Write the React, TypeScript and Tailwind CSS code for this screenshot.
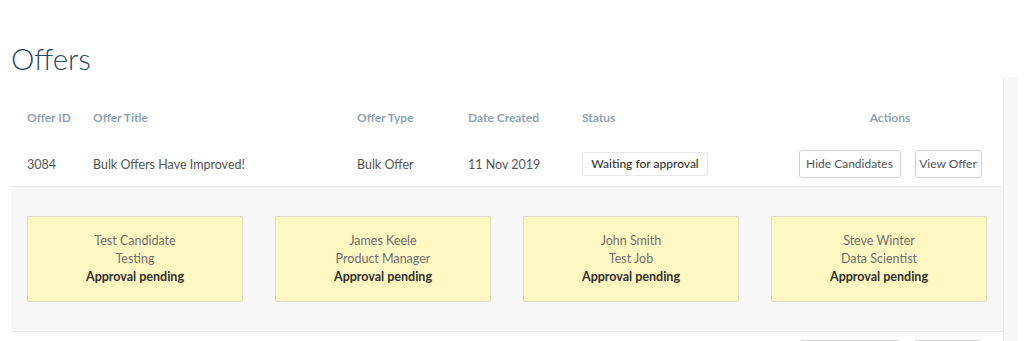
import React from "react";

const font = { fontFamily: "Lato, 'Noto Sans', sans-serif" };

const candidates = [
  { name: "Test Candidate", role: "Testing" },
  { name: "James Keele", role: "Product Manager" },
  { name: "John Smith", role: "Test Job" },
  { name: "Steve Winter", role: "Data Scientist" },
];

const cols = "grid grid-cols-[66px_264px_111px_114px_195px_1fr] pl-[16px]";

function Btn({ children, w }: { children?: React.ReactNode; w: string }) {
  return (
    <button
      className={`${w} h-[28px] border border-[#cfcfcf] rounded-[3px] bg-white text-[12px] text-[#555] leading-none text-center`}
    >
      {children}
    </button>
  );
}

export default function App() {
  return (
    <div className="w-[1024px] h-[341px] overflow-hidden bg-white flex" style={font}>
      <div className="w-[1003px] shrink-0 pl-[11px]">
        <h1 className="pt-[42px] text-[29.5px] leading-[34px] font-light text-[#1f4b62]">Offers</h1>
        <div className="mt-[23px]">
          <div className={`${cols} h-[42px] pt-[11px] text-[12px] leading-[16px] font-bold text-[#8fa4b1]`}>
            <div>Offer ID</div>
            <div>Offer Title</div>
            <div>Offer Type</div>
            <div>Date Created</div>
            <div>Status</div>
            <div className="text-center">Actions</div>
          </div>
          <div className={`${cols} h-[46px] items-center border-b border-[#ededed] text-[12.5px] text-[#555]`}>
            <div className="pt-[3px]">3084</div>
            <div className="pt-[3px]">Bulk Offers Have Improved!</div>
            <div className="pt-[3px]">Bulk Offer</div>
            <div className="pt-[3px]">11 Nov 2019</div>
            <div>
              <span className="inline-flex items-center justify-center w-[126px] h-[24px] border border-[#e6e6e6] rounded-[2px] bg-white text-[12px] font-medium text-[#333]">
                Waiting for approval
              </span>
            </div>
            <div className="flex justify-center gap-[14px]">
              <Btn w="w-[102px]">Hide Candidates</Btn>
              <Btn w="w-[67px]">View Offer</Btn>
            </div>
          </div>
          <div className="bg-[#f7f7f7] border-b border-[#e8e8e8] px-[16px] py-[29px]">
            <div className="grid grid-cols-[216px_216px_216px_216px] gap-[32px]">
              {candidates.map((c) => (
                <div
                  key={c.name}
                  className="h-[86px] flex flex-col items-center justify-center bg-[#fff7c2] border border-[#e0ddc4] rounded-[2px] text-[12.5px] leading-[18px]"
                >
                  <div className="text-[#6f6f6f]">{c.name}</div>
                  <div className="text-[#6f6f6f]">{c.role}</div>
                  <div className="font-bold text-[#2f2f2f]">Approval pending</div>
                </div>
              ))}
            </div>
          </div>
          <div className={`${cols} h-[46px] pt-[8px]`}>
            <div />
            <div />
            <div />
            <div />
            <div />
            <div className="flex justify-center gap-[14px]">
              <Btn w="w-[101px]" />
              <Btn w="w-[67px]" />
            </div>
          </div>
        </div>
      </div>
      <div className="mt-[77px] w-[15px] bg-[#f8f8f8] border-l border-[#ebebeb]" />
    </div>
  );
}
